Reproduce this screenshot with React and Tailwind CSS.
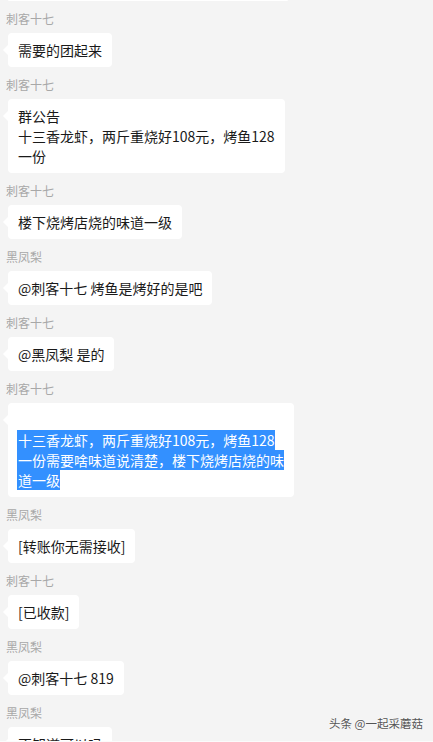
import React from "react";

const messages = [
  { name: "刺客十七", lines: ["需要的团起来"] },
  { name: "刺客十七", lines: ["群公告", "十三香龙虾，两斤重烧好108元，烤鱼128", "一份"] },
  { name: "刺客十七", lines: ["楼下烧烤店烧的味道一级"] },
  { name: "黑凤梨", lines: ["@刺客十七 烤鱼是烤好的是吧"] },
  { name: "刺客十七", lines: ["@黑凤梨 是的"] },
  {
    name: "刺客十七",
    selected: true,
    lines: ["", "十三香龙虾，两斤重烧好108元，烤鱼128", "一份需要啥味道说清楚，楼下烧烤店烧的味", "道一级"],
  },
  { name: "黑凤梨", lines: ["[转账你无需接收]"] },
  { name: "刺客十七", lines: ["[已收款]"] },
  { name: "黑凤梨", lines: ["@刺客十七 819"] },
  { name: "黑凤梨", lines: ["不知道可以吗"] },
];

const Bubble = ({ msg }) => (
  <div className="relative ml-[8px] mt-[5px] w-fit rounded-[4px] bg-white px-[10px] py-[7px] text-[14px] leading-[20px] text-[#1a1a1a]">
    <span className="absolute left-[-5px] top-[12px] h-0 w-0 border-y-[5px] border-r-[5px] border-y-transparent border-r-white" />
    {msg.lines.map((line, i) =>
      msg.selected && line ? (
        <div key={i} className="-ml-[1px] w-fit whitespace-nowrap bg-[#3390ff] pl-[1px] text-white">
          {line}
        </div>
      ) : (
        <div key={i} className="h-[20px] whitespace-nowrap">
          {line}
        </div>
      )
    )}
  </div>
);

export default function App() {
  return (
    <div
      className="relative h-[742px] w-[433px] overflow-hidden border-b border-[#fbfbfb] bg-[#f4f4f4]"
      style={{ fontFamily: '"Noto Sans CJK SC", "Noto Sans", sans-serif' }}
    >
      <div className="ml-[8px] h-[1px] w-[280px] rounded-b-[4px] bg-white" />
      {messages.map((msg, i) => (
        <div key={i} className="pt-[9px]">
          <div className="h-[18px] pl-[6px] text-[12px] leading-[18px] text-[#a8a8a8]">{msg.name}</div>
          <Bubble msg={msg} />
        </div>
      ))}
      <div className="absolute bottom-[10px] right-[10px] text-[11.5px] leading-[16px] text-[#555] [text-shadow:0_0_2px_#fff]">
        头条 @一起采蘑菇
      </div>
    </div>
  );
}
